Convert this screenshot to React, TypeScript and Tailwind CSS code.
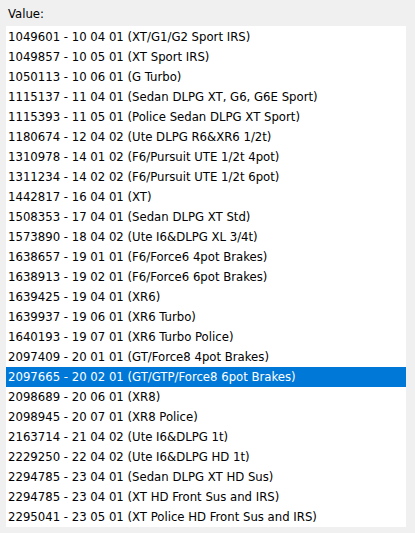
const items = [
  "1049601 - 10 04 01 (XT/G1/G2 Sport IRS)",
  "1049857 - 10 05 01 (XT Sport IRS)",
  "1050113 - 10 06 01 (G Turbo)",
  "1115137 - 11 04 01 (Sedan DLPG XT, G6, G6E Sport)",
  "1115393 - 11 05 01 (Police Sedan DLPG XT Sport)",
  "1180674 - 12 04 02 (Ute DLPG R6&XR6 1/2t)",
  "1310978 - 14 01 02 (F6/Pursuit UTE 1/2t 4pot)",
  "1311234 - 14 02 02 (F6/Pursuit UTE 1/2t 6pot)",
  "1442817 - 16 04 01 (XT)",
  "1508353 - 17 04 01 (Sedan DLPG XT Std)",
  "1573890 - 18 04 02 (Ute I6&DLPG XL 3/4t)",
  "1638657 - 19 01 01 (F6/Force6 4pot Brakes)",
  "1638913 - 19 02 01 (F6/Force6 6pot Brakes)",
  "1639425 - 19 04 01 (XR6)",
  "1639937 - 19 06 01 (XR6 Turbo)",
  "1640193 - 19 07 01 (XR6 Turbo Police)",
  "2097409 - 20 01 01 (GT/Force8 4pot Brakes)",
  "2097665 - 20 02 01 (GT/GTP/Force8 6pot Brakes)",
  "2098689 - 20 06 01 (XR8)",
  "2098945 - 20 07 01 (XR8 Police)",
  "2163714 - 21 04 02 (Ute I6&DLPG 1t)",
  "2229250 - 22 04 02 (Ute I6&DLPG HD 1t)",
  "2294785 - 23 04 01 (Sedan DLPG XT HD Sus)",
  "2294785 - 23 04 01 (XT HD Front Sus and IRS)",
  "2295041 - 23 05 01 (XT Police HD Front Sus and IRS)",
];

export default function App() {
  const selected = 17;
  return (
    <div
      className="w-[415px] h-[533px] bg-[#f0f0f0] text-[13px] text-black overflow-hidden"
      style={{ fontFamily: '"DejaVu Sans Condensed", "DejaVu Sans", sans-serif' }}
    >
      <div className="pl-[8px] pt-[5px] h-[26px] leading-[18px]">Value:</div>
      <ul className="ml-[6px] w-[400px] h-[501px] bg-white pt-[1px]">
        {items.map((t, i) => (
          <li
            key={i}
            className={
              "h-[20px] leading-[20px] pl-[2px] whitespace-nowrap " +
              (i === selected ? "bg-[#0078d7] text-white" : "")
            }
          >
            {t}
          </li>
        ))}
      </ul>
    </div>
  );
}
